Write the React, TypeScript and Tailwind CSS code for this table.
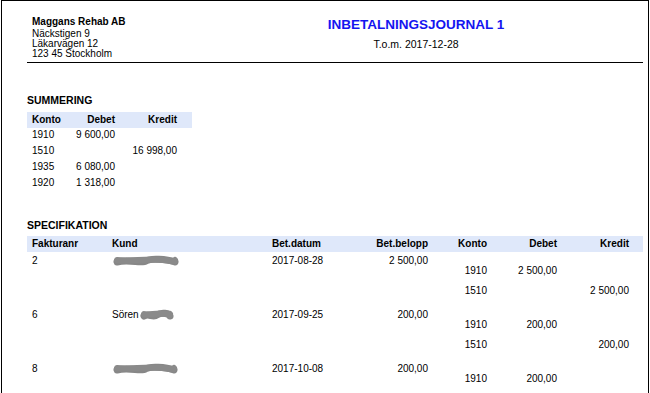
import React from 'react'

const font = { fontFamily: '"Liberation Sans", Arial, sans-serif' }

const summary = [
  { konto: '1910', debet: '9 600,00', kredit: '' },
  { konto: '1510', debet: '', kredit: '16 998,00' },
  { konto: '1935', debet: '6 080,00', kredit: '' },
  { konto: '1920', debet: '1 318,00', kredit: '' },
]

type Line = { konto: string; debet: string; kredit: string }
type Spec = { nr: string; prefix: string; blob: number; datum: string; belopp: string; lines: Line[] }

const specs: Spec[] = [
  {
    nr: '2',
    prefix: '',
    blob: 66,
    datum: '2017-08-28',
    belopp: '2 500,00',
    lines: [
      { konto: '1910', debet: '2 500,00', kredit: '' },
      { konto: '1510', debet: '', kredit: '2 500,00' },
    ],
  },
  {
    nr: '6',
    prefix: 'Sören',
    blob: 34,
    datum: '2017-09-25',
    belopp: '200,00',
    lines: [
      { konto: '1910', debet: '200,00', kredit: '' },
      { konto: '1510', debet: '', kredit: '200,00' },
    ],
  },
  {
    nr: '8',
    prefix: '',
    blob: 65,
    datum: '2017-10-08',
    belopp: '200,00',
    lines: [{ konto: '1910', debet: '200,00', kredit: '' }],
  },
]

// redacted name scribble
function Blob({ w }: { w: number }) {
  const a = w * 0.25
  const b = w * 0.5
  const c = w * 0.75
  return (
    <svg width={w} height={10} viewBox={`0 0 ${w} 10`} className="block overflow-visible">
      <path
        d={`M4 6 C ${a} 3, ${b - 4} 8, ${b} 5 S ${c + 4} 3, ${w - 4} 6`}
        fill="none"
        stroke="#878787"
        strokeWidth="7"
        strokeLinecap="round"
      />
      <path
        d={`M4 4 C ${a} 6, ${b} 2, ${c} 4 S ${w - 6} 6, ${w - 4} 4`}
        fill="none"
        stroke="#8a8a8a"
        strokeWidth="6"
        strokeLinecap="round"
      />
    </svg>
  )
}

export default function App() {
  return (
    <div className="w-[650px] h-[393px] overflow-hidden bg-white text-black" style={font}>
      <div className="ml-[1px] w-[648px] min-h-[420px] border-l border-t border-r border-black pl-[25px] pr-[5px]">

        {/* Header */}
        <div className="flex pt-[14px] pb-[3px] border-b border-black">
          <div className="w-[162px] pl-[5px]">
            <div className="text-[10px] leading-[14px] font-bold">Maggans Rehab AB</div>
            <div className="text-[10px] leading-[10px]">Näckstigen 9</div>
            <div className="text-[10px] leading-[10px]">Läkarvägen 12</div>
            <div className="text-[10px] leading-[10px]">123 45 Stockholm</div>
          </div>
          <div className="flex-1 text-center pt-[2px]">
            <div className="text-[13.5px] leading-[16px] font-bold text-[#1414f0]">INBETALNINGSJOURNAL 1</div>
            <div className="mt-[5px] text-[10.5px] leading-[12px]">T.o.m. 2017-12-28</div>
          </div>
        </div>

        {/* Summering */}
        <div className="mt-[31px] text-[10.5px] leading-[12px] font-bold">SUMMERING</div>
        <div className="mt-[6px] w-[165px]">
          <div className="flex h-[16px] bg-[#dfe8fa] text-[10px] leading-[16px] font-bold">
            <div className="w-[48px] pl-[5px]">Konto</div>
            <div className="w-[40px] text-right">Debet</div>
            <div className="w-[62px] text-right">Kredit</div>
          </div>
          {summary.map((r) => (
            <div key={r.konto} className="flex h-[16px] text-[10px] leading-[14px]">
              <div className="w-[48px] pl-[5px]">{r.konto}</div>
              <div className="w-[40px] text-right whitespace-nowrap">{r.debet}</div>
              <div className="w-[62px] text-right whitespace-nowrap">{r.kredit}</div>
            </div>
          ))}
        </div>

        {/* Specifikation */}
        <div className="mt-[27px] text-[10.5px] leading-[12px] font-bold">SPECIFIKATION</div>
        <div className="mt-[5px]">
          <div className="flex h-[16px] bg-[#dfe8fa] text-[10px] leading-[16px] font-bold">
            <div className="w-[85px] pl-[5px]">Fakturanr</div>
            <div className="w-[160px]">Kund</div>
            <div className="w-[80px]">Bet.datum</div>
            <div className="w-[76px] text-right">Bet.belopp</div>
            <div className="w-[59px] text-right">Konto</div>
            <div className="w-[70px] text-right">Debet</div>
            <div className="w-[72px] text-right">Kredit</div>
          </div>
          {specs.map((s) => (
            <div key={s.nr} className="flex pt-[2px] mb-[2px] text-[10px] leading-[14px]">
              <div className="flex w-[401px] h-[10px]">
                <div className="w-[85px] pl-[5px]">{s.nr}</div>
                <div className="w-[160px] h-[14px] flex items-center">
                  {s.prefix && <span>{s.prefix}</span>}
                  <span className="ml-[1px]">
                    <Blob w={s.blob} />
                  </span>
                </div>
                <div className="w-[80px]">{s.datum}</div>
                <div className="w-[76px] text-right whitespace-nowrap">{s.belopp}</div>
              </div>
              <div className="pt-[10px]">
                {s.lines.map((l) => (
                  <div key={l.konto} className="flex h-[20px]">
                    <div className="w-[59px] text-right">{l.konto}</div>
                    <div className="w-[70px] text-right whitespace-nowrap">{l.debet}</div>
                    <div className="w-[72px] text-right whitespace-nowrap">{l.kredit}</div>
                  </div>
                ))}
              </div>
            </div>
          ))}
        </div>
      </div>
    </div>
  )
}
